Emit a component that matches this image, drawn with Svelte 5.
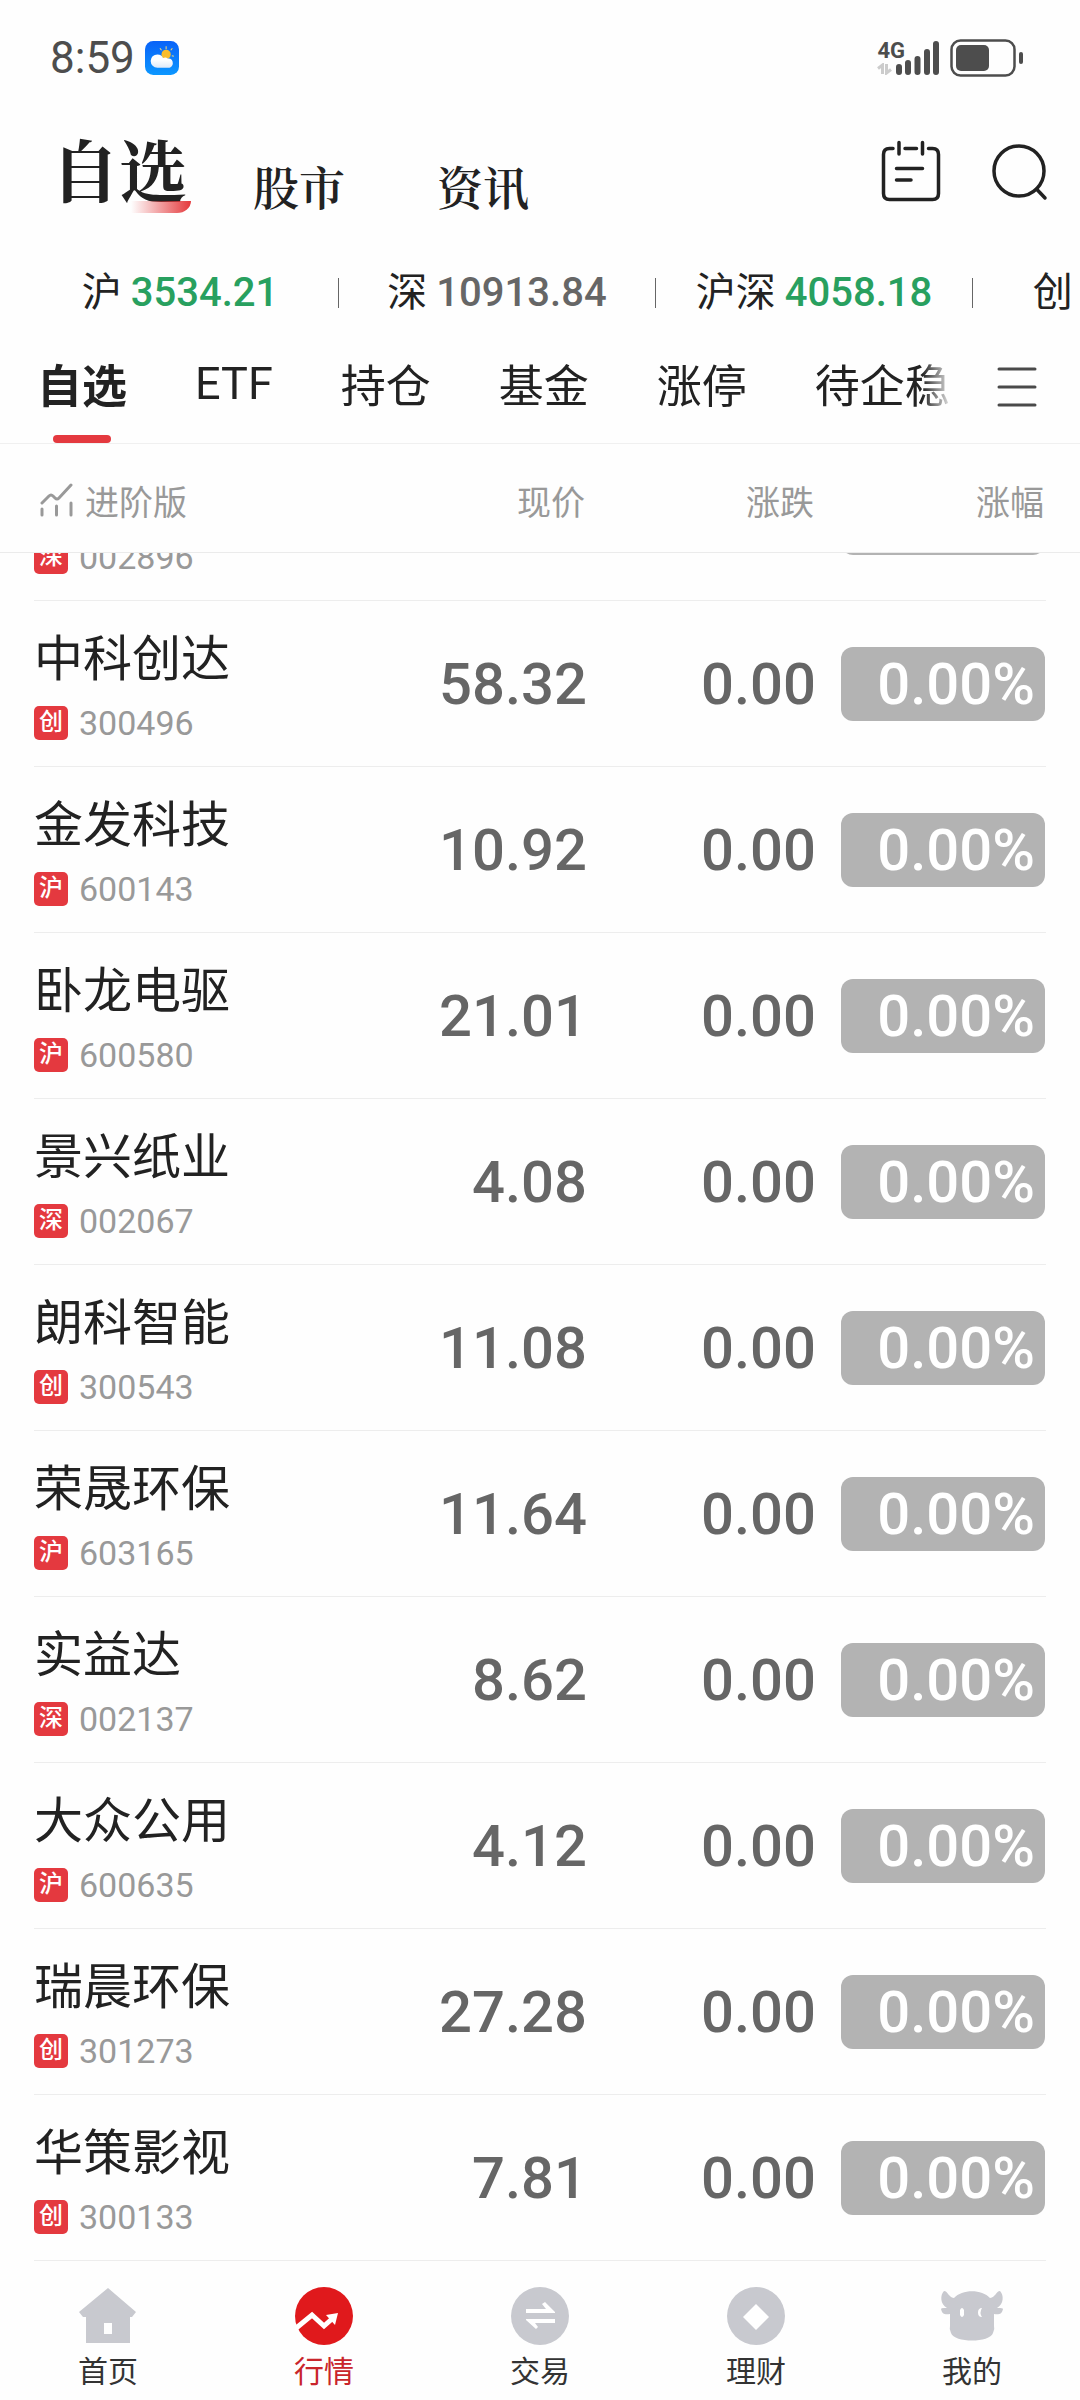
<script lang="ts">
    type Stock = {
        name: string;
        code: string;
        market: string;
        price: string;
    };

    let activeChannel = '自选';
    let activeGroup = '自选';
    let activeNav = '行情';

    const channels = ['自选', '股市', '资讯'];

    const indexes = [
        { name: '沪', value: '3534.21', down: true },
        { name: '深', value: '10913.84', down: false },
        { name: '沪深', value: '4058.18', down: true },
        { name: '创', value: '2246.30', down: true },
    ];

    const groups = ['自选', 'ETF', '持仓', '基金', '涨停', '待企稳'];

    const stocks: Stock[] = [
        { name: '中大力德', code: '002896', market: '深', price: '83.50' },
        { name: '中科创达', code: '300496', market: '创', price: '58.32' },
        { name: '金发科技', code: '600143', market: '沪', price: '10.92' },
        { name: '卧龙电驱', code: '600580', market: '沪', price: '21.01' },
        { name: '景兴纸业', code: '002067', market: '深', price: '4.08' },
        { name: '朗科智能', code: '300543', market: '创', price: '11.08' },
        { name: '荣晟环保', code: '603165', market: '沪', price: '11.64' },
        { name: '实益达', code: '002137', market: '深', price: '8.62' },
        { name: '大众公用', code: '600635', market: '沪', price: '4.12' },
        { name: '瑞晨环保', code: '301273', market: '创', price: '27.28' },
        { name: '华策影视', code: '300133', market: '创', price: '7.81' },
    ];

    const navItems = ['首页', '行情', '交易', '理财', '我的'];
</script>

<div class="app">
    <div class="status">
        <span class="time">8:59</span>
        <svg width="34" height="34" viewBox="0 0 33 33" aria-hidden="true">
            <defs>
                <linearGradient id="sky" x1="0" y1="0" x2="0" y2="1">
                    <stop offset="0" stop-color="#0a62f8" />
                    <stop offset="1" stop-color="#0c97ff" />
                </linearGradient>
                <linearGradient id="cloud" x1="0" y1="0" x2="0" y2="1">
                    <stop offset="0.4" stop-color="#fff" />
                    <stop offset="1" stop-color="#dfe9f8" />
                </linearGradient>
            </defs>
            <rect width="33" height="33" rx="8" fill="url(#sky)" />
            <path d="M20.5 5v3M14.5 7l1.5 2M26.5 7l-1.5 2M28 14.8l-2-.5" stroke="#f7d774" stroke-width="1" />
            <circle cx="20.5" cy="13" r="4.5" fill="#f9bd2d" />
            <path d="M12 26a6.500 6.500 0 0 1 0-13c3 0 5 1.500 5.500 3.500 2-1 3.500-.5 4.500 .5 3-.5 5 1.500 5 4.500 0 2.500-2 4.500-4 4.500z" fill="url(#cloud)" />
        </svg>
        <div class="signal">
            <div class="network">
                <span>4G</span>
                <svg width="15" height="12" viewBox="0 0 15 12" aria-hidden="true">
                    <path d="M5.500 11V2L1 5.500M9.500 1v9L14 6.500" fill="none" stroke="#ccc" stroke-width="3" />
                </svg>
            </div>
            <svg class="bars" width="43" height="34" viewBox="0 0 43 34" aria-hidden="true">
                <path d="M3 26v5M12 22v9M21.500 18v13M31 11v20M40 3v28" stroke="#4d4d4d" stroke-width="6" stroke-linecap="round" />
            </svg>
            <svg width="74" height="38" viewBox="0 0 74 38" aria-hidden="true">
                <rect x="1.500" y="1.500" width="63" height="35" rx="9" fill="none" stroke="#4d4d4d" stroke-width="2.500" />
                <rect x="6" y="6" width="33" height="26" rx="5" fill="#4d4d4d" />
                <rect x="69" y="13" width="4" height="12" rx="2" fill="#4d4d4d" />
            </svg>
        </div>
    </div>

    <header class="top">
        <nav class="channels">
            {#each channels as channel}
                <button class:active={activeChannel === channel} on:click={() => (activeChannel = channel)}>{channel}</button>
            {/each}
        </nav>
        <div class="tools">
            <button aria-label="日历">
                <svg width="60" height="62" viewBox="0 0 60 62">
                    <path d="M12 8.500H8.500Q2.500 8.500 2.500 14.500V53.500Q2.500 59.500 8.500 59.500H51.500Q57.500 59.500 57.500 53.500V14.500Q57.500 8.500 51.500 8.500H47.500M24 8.500H35.500M18 2.500V14M41.500 2.500V14M15.500 28.500H41.500M15.500 40H30" fill="none" stroke="#222" stroke-width="3.500" stroke-linecap="round" />
                </svg>
            </button>
            <button aria-label="搜索">
                <svg width="56" height="62" viewBox="0 0 56 62">
                    <circle cx="27" cy="31" r="25" fill="none" stroke="#222" stroke-width="3.500" />
                    <path d="M44.500 49l8.500 9" stroke="#222" stroke-width="3.500" stroke-linecap="round" />
                </svg>
            </button>
        </div>
    </header>

    <div class="ticker">
        {#each indexes as index}
            <a href="#index">
                {index.name}
                <span class="value" class:down={index.down}>{index.value}</span>
            </a>
            <span class="separator"></span>
        {/each}
    </div>

    <div class="groups">
        <div class="tabs">
            {#each groups as group}
                <button class:active={activeGroup === group} on:click={() => (activeGroup = group)}>{group}</button>
            {/each}
        </div>
        <button class="menu" aria-label="菜单">
            <svg width="40" height="42" viewBox="0 0 40 42">
                <path d="M2 3h36M2 21h36M2 39h36" stroke="#4a4a4a" stroke-width="3" stroke-linecap="round" />
            </svg>
        </button>
    </div>

    <div class="columns">
        <button class="mode">
            <svg width="34" height="34" viewBox="0 0 34 34" aria-hidden="true">
                <path d="M2 20l7-7q2-2 4 0l2 2q2 2 4 0L31 2M2 26v6M16.500 23v9M31 20v12" fill="none" stroke="#999" stroke-width="3" stroke-linecap="round" />
            </svg>
            进阶版
        </button>
        <button>现价</button>
        <button>涨跌</button>
        <button>涨幅</button>
    </div>

    <!-- the list is scrolled so that its last row rests on the bottom bar -->
    <main class="list">
        <table>
            <tbody>
                {#each stocks as stock (stock.code)}
                    <tr>
                        <th scope="row">
                            <div class="name">{stock.name}</div>
                            <div class="code"><span class="badge">{stock.market}</span>{stock.code}</div>
                        </th>
                        <td>{stock.price}</td>
                        <td class="change">0.00</td>
                        <td class="percent"><span class="pill">0.00%</span></td>
                    </tr>
                {/each}
            </tbody>
        </table>
    </main>

    <nav class="bottom">
        {#each navItems as item}
            <button class:active={activeNav === item} on:click={() => (activeNav = item)}>
                <svg width="64" height="60" viewBox="0 0 64 60" aria-hidden="true">
                    {#if item === '首页'}
                        <path fill-rule="evenodd" d="M32 2L60 26 56 31H54V57H10V31H7L3 26zM28 37V48H36V37z" />
                    {:else if item === '行情'}
                        <circle cx="32" cy="30" r="29" />
                        <path d="M3 43L20 29 32 40 41 32" fill="none" stroke="#fff" stroke-width="5" />
                        <path d="M34 29L46 27 43 39z" fill="#fff" />
                    {:else if item === '交易'}
                        <circle cx="32" cy="30" r="29" />
                        <path d="M18 23H38L34 18 37 16 47 26V27H18zM18 33H47V37H27L30 41 28 43 18 34z" fill="#fff" />
                    {:else if item === '理财'}
                        <circle cx="32" cy="30" r="29" />
                        <path d="M32 18L45 31 32 44 19 31z" fill="#fff" />
                    {:else}
                        <path d="M4 5C8 5 8 11 14 12 22 3 42 3 50 12 56 11 56 5 60 5 64 9 64 18 57 22 60 22 63 22 63 23 62 28 59 29 54 28L54 40Q55 43 53 47C50 57 14 57 11 47Q9 43 10 40L10 28C5 29 2 28 1 23 1 22 4 22 7 22 0 18 0 9 4 5z" />
                        <path d="M20 24q2-4 4 0v5q-2 4-4 0zM42 22q-3 5 0 9-4 0-4-4.500t4-4.500z" fill="#fff" />
                    {/if}
                </svg>
                {item}
            </button>
        {/each}
    </nav>
</div>

<style>
    :global(body) {
        background: #fefefe;
    }

    .app {
        display: flex;
        flex-direction: column;
        height: 100vh;
        overflow: hidden;
        color: #222;
        font-family: Roboto, "Noto Sans CJK SC", sans-serif;
    }

    button {
        padding: 0;
        border: none;
        background: none;
        color: inherit;
        font: inherit;
        cursor: pointer;
    }

    svg {
        display: block;
        flex: none;
    }

    .status {
        display: flex;
        flex: none;
        align-items: center;
        gap: 10px;
        height: 116px;
        padding: 0 56px 0 50px;
        color: #4d4d4d;
    }

    .time {
        font-size: 44px;
        line-height: 52px;
    }

    .signal {
        display: flex;
        align-items: center;
        margin-left: auto;
    }

    .network {
        height: 34px;
        font-size: 22px;
        font-weight: 700;
        line-height: 20px;
    }

    .network span {
        display: block;
    }

    .network svg {
        margin-top: 2px;
    }

    .bars {
        margin: 0 11px 0 -9px;
    }

    .top {
        display: flex;
        flex: none;
        align-items: center;
        justify-content: space-between;
        height: 110px;
        padding: 0 32px 0 51px;
    }

    .channels {
        display: flex;
        align-items: flex-end;
        gap: 40px;
        font-family: "Noto Serif CJK SC", "Noto Sans CJK SC", serif;
    }

    .channels button {
        padding: 0 26px;
        font-size: 46px;
        font-weight: 600;
        line-height: 52px;
    }

    .channels .active {
        position: relative;
        padding: 0 0 6px;
        font-size: 68px;
        font-weight: 700;
        line-height: 74px;
    }

    .channels .active::after {
        content: '';
        position: absolute;
        right: -4px;
        bottom: -2px;
        width: 60px;
        height: 12px;
        border-bottom-right-radius: 14px 12px;
        background: linear-gradient(to right, transparent, #e4393c);
    }

    .tools {
        display: flex;
        gap: 51px;
    }

    .ticker {
        display: flex;
        flex: none;
        align-items: center;
        height: 74px;
        padding: 30px 0 0 22px;
        overflow: hidden;
    }

    .ticker a {
        display: flex;
        flex: 0 0 316px;
        justify-content: center;
        gap: 9px;
        color: #222;
        font-size: 40px;
        line-height: 48px;
        text-decoration: none;
    }

    .value {
        color: #666;
        font-weight: 500;
    }

    .value.down {
        color: #28a05f;
    }

    .separator {
        flex: none;
        width: 1px;
        height: 30px;
        background: #666;
    }

    .groups {
        display: flex;
        flex: none;
        height: 113px;
        padding: 0 43px 0 37px;
        border-bottom: 1px solid #f0f0f0;
    }

    .tabs {
        display: flex;
        flex: 1;
        gap: 68px;
        min-width: 0;
        margin-right: 43px;
        overflow: hidden;
        mask-image: linear-gradient(to left, transparent, #000 32px);
    }

    .tabs button {
        flex: none;
        padding-bottom: 6px;
        font-size: 45px;
    }

    .tabs .active {
        position: relative;
        font-weight: 700;
    }

    .tabs .active::after {
        content: '';
        position: absolute;
        bottom: 0;
        left: 50%;
        width: 58px;
        height: 8px;
        margin-left: -29px;
        border-radius: 4px;
        background: #e4393f;
    }

    .columns {
        display: grid;
        flex: none;
        grid-template-columns: 1fr 232px 229px 230px;
        align-items: center;
        height: 104px;
        padding: 4px 36px 0 34px;
        border-bottom: 1px solid #ebebeb;
        color: #999;
        font-size: 34px;
    }

    .columns button {
        text-align: right;
    }

    .columns .mode {
        display: flex;
        align-items: center;
        gap: 11px;
        padding-left: 6px;
    }

    .list {
        display: flex;
        flex: 1;
        flex-direction: column;
        justify-content: flex-end;
        min-height: 0;
        padding: 0 34px;
        overflow: hidden;
    }

    table {
        width: 100%;
        border-collapse: separate;
        border-spacing: 0;
        table-layout: fixed;
    }

    th,
    td {
        padding: 0;
        border-bottom: 1px solid #ededed;
    }

    th {
        padding: 26px 0;
        font-weight: 400;
        text-align: left;
    }

    td {
        width: 233px;
        color: #666;
        font-size: 58px;
        font-weight: 500;
        text-align: right;
        vertical-align: middle;
    }

    .change {
        width: 229px;
    }

    .percent {
        width: 229px;
        padding-right: 1px;
    }

    .name {
        font-size: 49px;
        line-height: 66px;
    }

    .code {
        display: flex;
        align-items: center;
        gap: 11px;
        margin-top: 13px;
        color: #999;
        font-size: 34px;
        line-height: 34px;
    }

    .badge {
        width: 34px;
        height: 34px;
        border-radius: 5px;
        background: #e4393f;
        color: #fff;
        font-size: 24px;
        font-weight: 500;
        line-height: 32px;
        text-align: center;
    }

    .pill {
        display: block;
        width: 194px;
        height: 74px;
        margin-left: auto;
        padding-right: 10px;
        border-radius: 12px;
        background: #b3b3b3;
        color: #fff;
        line-height: 74px;
    }

    .bottom {
        display: flex;
        flex: none;
        height: 139px;
    }

    .bottom button {
        display: flex;
        flex: 1;
        flex-direction: column;
        align-items: center;
        gap: 6px;
        padding-top: 25px;
        color: #333;
        font-size: 30px;
        line-height: 40px;
    }

    .bottom svg {
        fill: #c8c9cf;
    }

    .bottom .active {
        color: #c9252b;
    }

    .bottom .active svg {
        fill: #e0191c;
    }
</style>
